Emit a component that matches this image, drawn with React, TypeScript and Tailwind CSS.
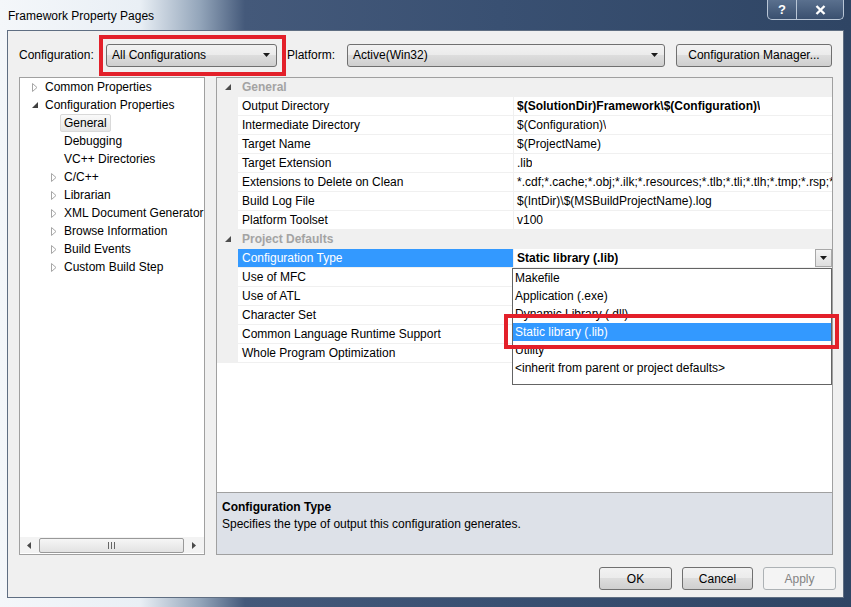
import React from 'react';

type TreeItem = { label: string; level: 0 | 1; arrow: 'open' | 'closed' | null; selected?: boolean };

const treeItems: TreeItem[] = [
  { label: 'Common Properties', level: 0, arrow: 'closed' },
  { label: 'Configuration Properties', level: 0, arrow: 'open' },
  { label: 'General', level: 1, arrow: null, selected: true },
  { label: 'Debugging', level: 1, arrow: null },
  { label: 'VC++ Directories', level: 1, arrow: null },
  { label: 'C/C++', level: 1, arrow: 'closed' },
  { label: 'Librarian', level: 1, arrow: 'closed' },
  { label: 'XML Document Generator', level: 1, arrow: 'closed' },
  { label: 'Browse Information', level: 1, arrow: 'closed' },
  { label: 'Build Events', level: 1, arrow: 'closed' },
  { label: 'Custom Build Step', level: 1, arrow: 'closed' },
];

type GridRow =
  | { kind: 'cat'; label: string }
  | { kind: 'prop'; name: string; value: string; bold?: boolean; selected?: boolean };

const gridRows: GridRow[] = [
  { kind: 'cat', label: 'General' },
  { kind: 'prop', name: 'Output Directory', value: '$(SolutionDir)Framework\\$(Configuration)\\', bold: true },
  { kind: 'prop', name: 'Intermediate Directory', value: '$(Configuration)\\' },
  { kind: 'prop', name: 'Target Name', value: '$(ProjectName)' },
  { kind: 'prop', name: 'Target Extension', value: '.lib' },
  {
    kind: 'prop',
    name: 'Extensions to Delete on Clean',
    value: '*.cdf;*.cache;*.obj;*.ilk;*.resources;*.tlb;*.tli;*.tlh;*.tmp;*.rsp;*.pgc;*.pgd;*.meta;$(TargetPath)',
  },
  { kind: 'prop', name: 'Build Log File', value: '$(IntDir)\\$(MSBuildProjectName).log' },
  { kind: 'prop', name: 'Platform Toolset', value: 'v100' },
  { kind: 'cat', label: 'Project Defaults' },
  { kind: 'prop', name: 'Configuration Type', value: 'Static library (.lib)', bold: true, selected: true },
  { kind: 'prop', name: 'Use of MFC', value: '' },
  { kind: 'prop', name: 'Use of ATL', value: '' },
  { kind: 'prop', name: 'Character Set', value: '' },
  { kind: 'prop', name: 'Common Language Runtime Support', value: '' },
  { kind: 'prop', name: 'Whole Program Optimization', value: '' },
];

const options = [
  'Makefile',
  'Application (.exe)',
  'Dynamic Library (.dll)',
  'Static library (.lib)',
  'Utility',
  '<inherit from parent or project defaults>',
];

const btnFace =
  'border border-[#707070] rounded-[3px] bg-[linear-gradient(#f2f2f2_0%,#ebebeb_50%,#dddddd_50%,#cfcfcf_100%)]';

function DownArrow() {
  return (
    <svg width="7" height="4" viewBox="0 0 7 4">
      <path d="M0 0H7L3.5 4Z" fill="#1a1a1a" />
    </svg>
  );
}

function Combo({ text, width }: { text: string; width: string }) {
  return (
    <div className={`${width} h-[23px] flex items-center justify-between pl-[5px] pr-[6px] ${btnFace}`}>
      <span>{text}</span>
      <DownArrow />
    </div>
  );
}

function TreeArrow({ kind }: { kind: 'open' | 'closed' | null }) {
  if (kind === 'closed')
    return (
      <svg width="6" height="9" viewBox="0 0 6 9">
        <path d="M0.5 0.5L5 4.5L0.5 8.5Z" fill="none" stroke="#a6a6a6" />
      </svg>
    );
  if (kind === 'open')
    return (
      <svg width="6" height="6" viewBox="0 0 6 6">
        <path d="M6 0V6H0Z" fill="#404040" />
      </svg>
    );
  return null;
}

function Tree() {
  return (
    <div className="w-[186px] h-full flex flex-col border border-[#a0a0a0] bg-white">
      <div className="flex-1">
        {treeItems.map((item) => (
          <div
            key={item.label}
            className={`h-[18px] flex items-center ${item.level === 1 ? 'pl-[28px]' : 'pl-[9px]'}`}
          >
            <div className="w-[12px] flex justify-center">
              <TreeArrow kind={item.arrow} />
            </div>
            {item.selected ? (
              <span className="px-[3px] h-[18px] leading-[16px] border border-[#d9d9d9] rounded-[2px] bg-[linear-gradient(#fafafa,#e5e5e5)] whitespace-nowrap">
                {item.label}
              </span>
            ) : (
              <span className="ml-[4px] whitespace-nowrap">{item.label}</span>
            )}
          </div>
        ))}
      </div>
      {/* horizontal scrollbar */}
      <div className="h-[16px] mb-[1px] flex items-center bg-[#f3f3f3]">
        <div className="w-[18px] flex justify-center">
          <svg width="4" height="7" viewBox="0 0 4 7">
            <path d="M4 0V7L0 3.5Z" fill="#4a4a4a" />
          </svg>
        </div>
        <div className="ml-[1px] w-[145px] h-[15px] flex items-center justify-center border border-[#999] rounded-[2px] bg-[linear-gradient(#f6f6f6,#e2e2e2)]">
          <svg width="7" height="7" viewBox="0 0 7 7">
            <path d="M0.5 0V7M3.5 0V7M6.5 0V7" stroke="#666" />
          </svg>
        </div>
        <div className="flex-1 flex justify-center">
          <svg width="4" height="7" viewBox="0 0 4 7">
            <path d="M0 0V7L4 3.5Z" fill="#4a4a4a" />
          </svg>
        </div>
      </div>
    </div>
  );
}

function DropList() {
  return (
    <div className="absolute z-10 left-[-2px] top-[19px] w-[320px] h-[117px] border border-[#646464] bg-white pb-[7px]">
      {options.map((o) => (
        <div
          key={o}
          className={`h-[18px] pl-[2px] flex items-center whitespace-nowrap ${
            o === 'Static library (.lib)' ? 'bg-[#3399ff] text-white' : ''
          }`}
        >
          {o}
        </div>
      ))}
    </div>
  );
}

function Grid() {
  return (
    <div className="flex-1 flex flex-col border border-b-0 border-[#a0a0a0] bg-white">
      {gridRows.map((row, i) =>
        row.kind === 'cat' ? (
          <div key={i} className="h-[19px] flex items-center bg-[#f0f0f0] border-b border-[#f0f0f0]">
            <div className="w-[21px] flex justify-center">
              <svg width="6" height="6" viewBox="0 0 6 6">
                <path d="M6 0V6H0Z" fill="#4d4d4d" />
              </svg>
            </div>
            <span className="pl-[4px] font-bold text-[#a3a3a3]">{row.label}</span>
          </div>
        ) : (
          <div key={i} className="h-[19px] flex border-b border-[#f0f0f0]">
            <div className="w-[21px] bg-[#f0f0f0]" />
            <div
              className={`w-[276px] pl-[4px] flex items-center border-r border-[#f0f0f0] whitespace-nowrap overflow-hidden ${
                row.selected ? 'bg-[#3399ff] text-white' : 'bg-white'
              }`}
            >
              {row.name}
            </div>
            <div className="relative flex-1 min-w-0 flex items-center bg-white">
              <span className={`pl-[3px] whitespace-nowrap overflow-hidden ${row.bold ? 'font-bold' : ''}`}>
                {row.value}
              </span>
              {row.selected && (
                <>
                  <div className="ml-auto w-[17px] h-[18px] flex items-center justify-center border border-[#a8a8a8] bg-[linear-gradient(#f4f4f4,#dedede)]">
                    <DownArrow />
                  </div>
                  <DropList />
                </>
              )}
            </div>
          </div>
        )
      )}
      <div className="flex-1 bg-white" />
    </div>
  );
}

export default function App() {
  return (
    <div className="relative w-[851px] h-[607px] overflow-hidden font-['Liberation_Sans',Arial,sans-serif] text-[12px] text-black bg-[linear-gradient(90deg,#f4f7fa_0px,#e9eff5_140px,#93a5ba_200px,#44597a_245px,#395072_500px,#2f4564_851px)]">
      {/* title bar */}
      <div className="h-[30px] flex items-start justify-between">
        <div className="pl-[8px] pt-[8px] leading-[16px] text-[12px]">Framework Property Pages</div>
        <div className="mr-[7px] h-[20px] flex border border-t-0 border-[#b9c6d6] rounded-b-[5px] overflow-hidden bg-[linear-gradient(#5a708e,#3a506f)]">
          <div className="w-[29px] flex items-center justify-center border-r border-[#b9c6d6] text-white font-bold text-[13px]">
            ?
          </div>
          <div className="w-[46px] flex items-center justify-center">
            <svg width="11" height="10" viewBox="0 0 11 10">
              <path d="M1.5 1L9.5 9M9.5 1L1.5 9" stroke="#fff" strokeWidth="2.4" />
            </svg>
          </div>
        </div>
      </div>

      {/* client area */}
      <div className="ml-[7px] w-[837px] h-[568px] border border-[#5f6e82] bg-[#f0f0f0] flex flex-col pt-[12px]">
        <div className="h-[24px] pl-[11px] flex items-center">
          <span className="w-[87px]">Configuration:</span>
          <Combo text="All Configurations" width="w-[171px]" />
          <span className="ml-[10px] w-[60px]">Platform:</span>
          <Combo text="Active(Win32)" width="w-[318px]" />
          <div className={`ml-[11px] w-[156px] h-[23px] flex items-center justify-center ${btnFace}`}>
            Configuration Manager...
          </div>
        </div>

        <div className="mt-[10px] h-[478px] pl-[11px] flex gap-[11px]">
          <Tree />
          <div className="w-[617px] flex flex-col">
            <Grid />
            <div className="h-[63px] border border-[#a0a0a0] bg-[#dde1e8] pl-[5px] pt-[6px] leading-[17px]">
              <div className="font-bold">Configuration Type</div>
              <div>Specifies the type of output this configuration generates.</div>
            </div>
          </div>
        </div>

        <div className="mt-[12px] pr-[7px] flex justify-end gap-[10px]">
          <div className={`w-[73px] h-[23px] flex items-center justify-center ${btnFace}`}>OK</div>
          <div className={`w-[71px] h-[23px] flex items-center justify-center ${btnFace}`}>Cancel</div>
          <div className="w-[73px] h-[23px] flex items-center justify-center border border-[#adb2b5] rounded-[3px] bg-[#f4f4f4] text-[#838383]">
            Apply
          </div>
        </div>
      </div>

      {/* red annotation boxes */}
      <div className="pointer-events-none absolute left-[99px] top-[35px] w-[187px] h-[41px] border-[4px] border-[#e3202a]" />
      <div className="pointer-events-none absolute z-20 left-[504px] top-[314px] w-[335px] h-[35px] border-[4px] border-[#e3202a]" />
    </div>
  );
}
